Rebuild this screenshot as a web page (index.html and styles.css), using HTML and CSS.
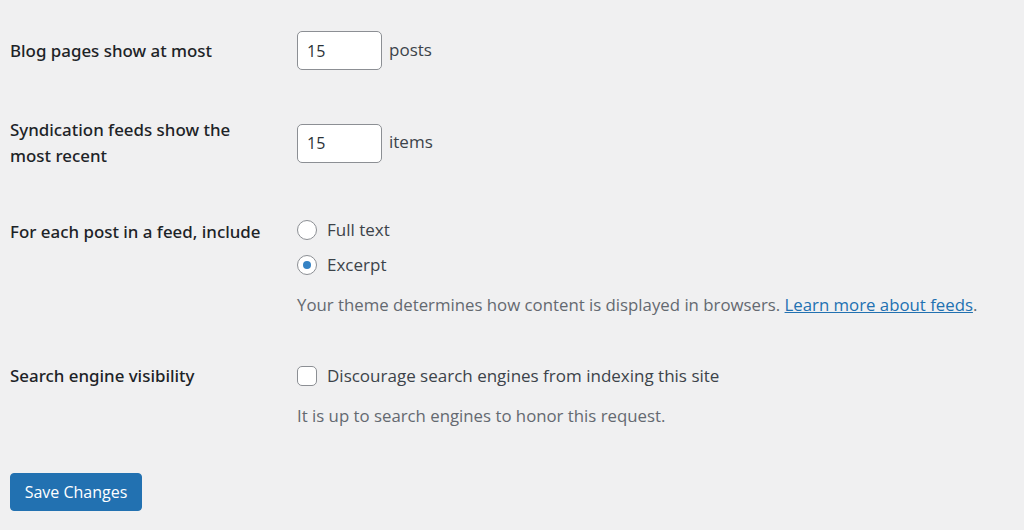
FILE: index.html
```html
<!DOCTYPE html>
<html lang="en">
<head>
<meta charset="utf-8">
<title>Reading Settings</title>
<link rel="stylesheet" href="styles.css">
</head>
<body>
<form class="settings">
  <div class="form-row row-first">
    <div class="label">Blog pages show at most</div>
    <div class="field inline">
      <input class="num" type="text" value="15"> <span class="unit">posts</span>
    </div>
  </div>
  <div class="form-row row-center">
    <div class="label label-wrap">Syndication feeds show the most recent</div>
    <div class="field inline">
      <input class="num" type="text" value="15"> <span class="unit">items</span>
    </div>
  </div>
  <div class="form-row row-feed">
    <div class="label label-low">For each post in a feed, include</div>
    <div class="field">
      <label class="choice"><span class="radio"></span>Full text</label>
      <label class="choice choice-next"><span class="radio checked"></span>Excerpt</label>
      <p class="desc">Your theme determines how content is displayed in browsers. <a href="#">Learn more about feeds</a>.</p>
    </div>
  </div>
  <div class="form-row row-search">
    <div class="label">Search engine visibility</div>
    <div class="field">
      <label class="choice"><span class="checkbox"></span>Discourage search engines from indexing this site</label>
      <p class="desc">It is up to search engines to honor this request.</p>
    </div>
  </div>
  <div class="actions">
    <button type="button" class="button-primary">Save Changes</button>
  </div>
</form>
</body>
</html>
```

FILE: styles.css
```css
html, body {
  margin: 0;
  padding: 0;
  background: #f0f0f1;
}
body {
  font-family: "Open Sans", "Noto Sans", "Liberation Sans", sans-serif;
  font-size: 17px;
  color: #3c434a;
  width: 1024px;
  height: 530px;
  overflow: hidden;
}
.settings {
  padding: 0 0 0 10px;
  display: flex;
  flex-direction: column;
}
.form-row {
  display: grid;
  grid-template-columns: 287px 1fr;
  align-items: start;
  margin-top: 47px;
}
.row-first {
  margin-top: 31px;
  align-items: center;
}
.row-center {
  align-items: center;
}
.row-feed {
  margin-top: 48px;
}
.row-search {
  margin-top: 45px;
}
.label {
  font-family: "Noto Sans", "Open Sans", sans-serif;
  color: #1d2327;
  font-weight: 500;
  font-size: 16.9px;
  line-height: 26px;
}
.label-low {
  padding-top: 2px;
}
.label-wrap {
  width: 240px;
}
.field {
  line-height: 26px;
}
.inline {
  display: flex;
  align-items: center;
  gap: 7px;
}
.num {
  box-sizing: border-box;
  width: 85px;
  height: 39px;
  border: 1px solid #8c8f94;
  border-radius: 5px;
  background: #fff;
  padding: 0 9px;
  font-family: inherit;
  font-size: 16px;
  color: #2c3338;
  margin: 0;
}
.unit {
  margin-top: -2px;
}
.choice {
  display: flex;
  align-items: center;
  gap: 10px;
  height: 26px;
}
.choice-next {
  margin-top: 9px;
}
.radio, .checkbox {
  box-sizing: border-box;
  width: 20px;
  height: 20px;
  border: 1px solid #8c8f94;
  background: #fff;
  flex: none;
  position: relative;
}
.radio {
  border-radius: 50%;
}
.radio.checked::after {
  content: "";
  position: absolute;
  left: 5px;
  top: 5px;
  width: 8px;
  height: 8px;
  border-radius: 50%;
  background: #3582c4;
}
.checkbox {
  border-radius: 5px;
}
.desc {
  margin: 14px 0 0;
  color: #646970;
  font-size: 16.8px;
}
.desc a {
  color: #2271b1;
  text-decoration: underline;
}
.actions {
  margin-top: 44px;
}
.button-primary {
  box-sizing: border-box;
  height: 38px;
  width: 132px;
  background: #2271b1;
  border: 1px solid #2271b1;
  border-radius: 4px;
  color: #fff;
  font-family: inherit;
  font-size: 16px;
  padding: 0;
  margin: 0;
}
```
